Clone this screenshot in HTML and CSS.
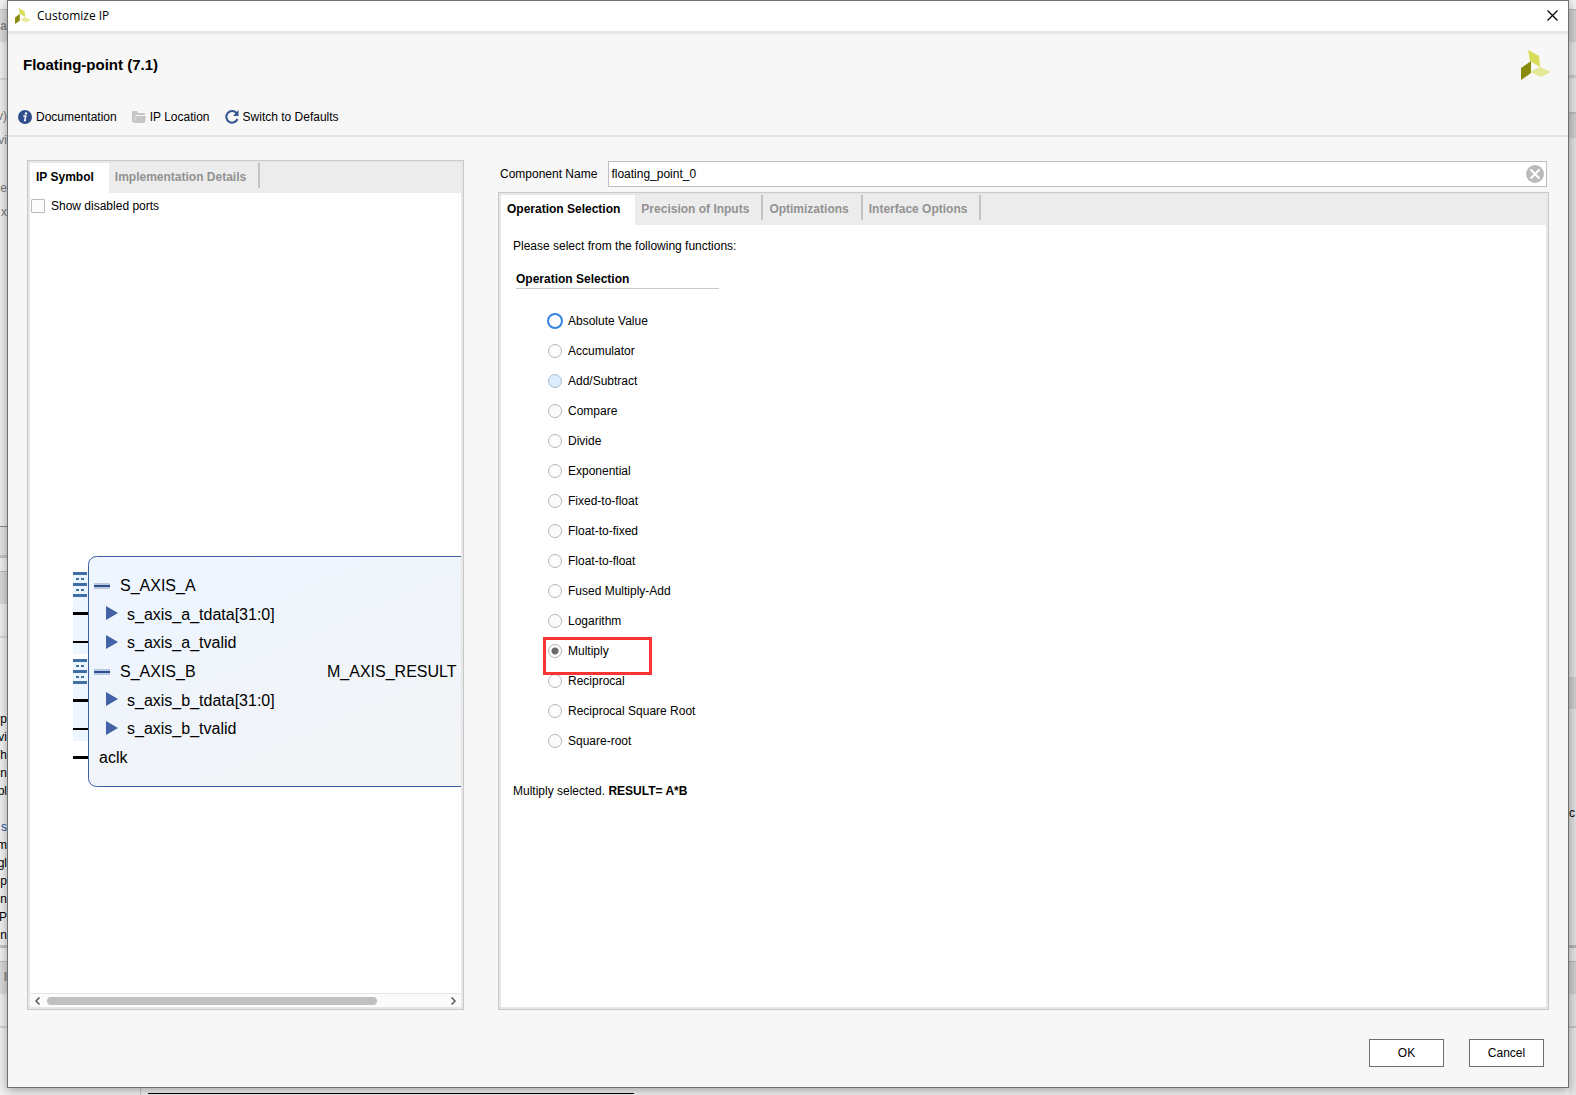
FILE: index.html
```
<!DOCTYPE html>
<html lang="en">
<head>
    <meta charset="utf-8">
    <meta name="viewport" content="width=device-width, initial-scale=1">
    <title>Customize IP</title>
    <link rel="stylesheet" href="styles.css">
</head>

<body>

<!-- main window, only its edges show round the dialog -->
<div class="backdrop" aria-hidden="true">
    <div class="edge edge-left">
        <div class="edge-tab"><p>a</p></div>
        <div class="edge-tree"><p>v)</p><p>vi</p><p> </p><p>e</p><p>x</p></div>
        <div class="edge-text">
            <p>Op</p><p>vi</p><p>Th</p><p>un</p><p>pl</p><p> </p><p class="link">s</p><p>m</p><p>gl</p><p>p</p><p>in</p><p>P</p><p>n</p>
        </div>
        <div class="edge-tab"><p>I</p></div>
    </div>
    <div class="edge edge-right"><p>c</p></div>
    <div class="edge-bottom"></div>
</div>

<main class="dialog">
    <header class="titlebar">
        <svg class="logo-small" viewBox="0 0 30 30" width="16" height="16">
            <path fill="#d9dc56" d="M7 0 18 6 19 17 9 11z" />
            <path fill="#8a8b0d" d="M0 18 9 11 9 24 0 30z" />
            <path fill="#e8eaa0" d="M10 22 19 17 30 22 20 27z" />
        </svg>
        <span class="title">Customize IP</span>
        <button class="close" aria-label="Close">
            <svg viewBox="0 0 11 11" width="11" height="11"><path d="M.5.5l10 10M10.500.5l-10 10" fill="none" stroke="#000" stroke-width="1.2" /></svg>
        </button>
    </header>

    <div class="head">
        <h1>Floating-point (7.1)</h1>
        <svg viewBox="0 0 30 30" width="30" height="30">
            <path fill="#d9dc56" d="M7 0 18 6 19 17 9 11z" />
            <path fill="#8a8b0d" d="M0 18 10 11 10 23 0 30z" />
            <path fill="#e5e896" d="M9 22 19 17 30 22 20 27z" />
        </svg>
    </div>

    <nav class="toolbar">
        <button>
            <svg viewBox="0 0 14 14" width="14" height="14">
                <circle cx="7" cy="7" r="7" fill="#2f4f8a" />
                <circle cx="8" cy="3.400" r="1.200" fill="#fff" />
                <path d="M5.300 6h2.500L6.700 10.500h1.200" fill="none" stroke="#fff" stroke-width="1.500" />
            </svg>
            Documentation
        </button>
        <button>
            <svg viewBox="0 0 14 14" width="14" height="14">
                <path fill="#c6c6c6" d="M0 2q0-1 1-1h4l1 2h6q1 0 1 1v1H4L2 12H0z" />
                <path fill="#c6c6c6" d="M4.500 6H14l-1 6q0 1-1 1H1.500z" />
            </svg>
            IP Location
        </button>
        <button>
            <svg viewBox="0 0 14 14" width="14" height="14">
                <path d="M11.500 3A5.800 5.800 0 1 0 12.500 9" fill="none" stroke="#34558f" stroke-width="2" />
                <path fill="#34558f" d="M13.500 0v6H8z" />
            </svg>
            Switch to Defaults
        </button>
    </nav>

    <div class="content">
        <section class="panel symbol">
            <div class="tabs" role="tablist">
                <button class="tab active" role="tab" aria-selected="true">IP Symbol</button>
                <button class="tab" role="tab">Implementation Details</button>
            </div>
            <label class="check"><input type="checkbox"> Show disabled ports</label>
            <svg class="diagram" height="234" aria-label="IP symbol">
                <defs>
                    <linearGradient id="body" x1="0" y1="0" x2="1" y2="1">
                        <stop offset="0" stop-color="#edf5ff" />
                        <stop offset="1" stop-color="#f4f4f4" />
                    </linearGradient>
                    <g id="bus">
                        <path fill="#edf5ff" d="M43 0h15v82H43z" />
                        <path fill="#3d6fa5" d="M43 0h14v3H43zM43 11h14v3H43zM43 22h14v3H43zM46 6h3v2h-3zM51 6h3v2h-3zM46 17h3v2h-3zM51 17h3v2h-3z" />
                        <path fill="#000" d="M43 40h15v3H43zM43 69h15v2H43z" />
                    </g>
                    <g id="pins">
                        <path fill="#b9c8de" d="M64 11h16v6H64z" />
                        <path fill="#2d4f8d" d="M64 13h16v2H64z" />
                        <path fill="#4263a5" d="M76 34l12 7-12 7zM76 63l12 7-12 7z" />
                    </g>
                </defs>
                <use href="#bus" y="18" />
                <use href="#bus" y="105" />
                <path fill="#000" d="M43 202h15v3H43z" />
                <rect x="58.500" y="2.500" width="520" height="230" rx="8" fill="url(#body)" stroke="#3a5fa5" />
                <use href="#pins" y="18" />
                <use href="#pins" y="104" />
                <text x="90" y="37">S_AXIS_A</text>
                <text x="97" y="66">s_axis_a_tdata[31:0]</text>
                <text x="97" y="94">s_axis_a_tvalid</text>
                <text x="90" y="123">S_AXIS_B</text>
                <text x="297" y="123">M_AXIS_RESULT</text>
                <text x="97" y="152">s_axis_b_tdata[31:0]</text>
                <text x="97" y="180">s_axis_b_tvalid</text>
                <text x="69" y="209">aclk</text>
            </svg>
            <div class="scrollbar">
                <svg viewBox="0 0 5 8" width="5" height="8"><path d="M4.500 0.500L1 4l3.500 3.500" fill="none" stroke="#555" stroke-width="1.500" /></svg>
                <div class="track"><div class="thumb"></div></div>
                <svg viewBox="0 0 5 8" width="5" height="8"><path d="M.5.5L4 4 .5 7.500" fill="none" stroke="#555" stroke-width="1.500" /></svg>
            </div>
        </section>

        <section class="config">
            <div class="name-row">
                <label for="component">Component Name</label>
                <div class="name-box">
                    <input id="component" type="text" value="floating_point_0">
                    <button aria-label="Clear">
                        <svg viewBox="0 0 18 18" width="18" height="18">
                            <circle cx="9" cy="9" r="9" fill="#b9bbbd" />
                            <path d="M4.500 4.500l9 9M13.500 4.500l-9 9" stroke="#fff" stroke-width="2" />
                        </svg>
                    </button>
                </div>
            </div>

            <div class="panel">
                <div class="tabs" role="tablist">
                    <button class="tab active" role="tab" aria-selected="true">Operation Selection</button>
                    <button class="tab" role="tab">Precision of Inputs</button>
                    <button class="tab" role="tab">Optimizations</button>
                    <button class="tab" role="tab">Interface Options</button>
                </div>
                <div class="page">
                    <p>Please select from the following functions:</p>
                    <fieldset>
                        <legend>Operation Selection</legend>
                        <label><input class="focused" type="radio" name="op"> Absolute Value</label>
                        <label><input type="radio" name="op"> Accumulator</label>
                        <label><input class="hovered" type="radio" name="op"> Add/Subtract</label>
                        <label><input type="radio" name="op"> Compare</label>
                        <label><input type="radio" name="op"> Divide</label>
                        <label><input type="radio" name="op"> Exponential</label>
                        <label><input type="radio" name="op"> Fixed-to-float</label>
                        <label><input type="radio" name="op"> Float-to-fixed</label>
                        <label><input type="radio" name="op"> Float-to-float</label>
                        <label><input type="radio" name="op"> Fused Multiply-Add</label>
                        <label><input type="radio" name="op"> Logarithm</label>
                        <label class="marked"><input type="radio" name="op" checked> Multiply</label>
                        <label><input type="radio" name="op"> Reciprocal</label>
                        <label><input type="radio" name="op"> Reciprocal Square Root</label>
                        <label><input type="radio" name="op"> Square-root</label>
                    </fieldset>
                    <p>Multiply selected. <b>RESULT= A*B</b></p>
                </div>
            </div>
        </section>
    </div>

    <footer>
        <button>OK</button>
        <button>Cancel</button>
    </footer>
</main>

</body>
</html>
```
FILE: styles.css
```
*, ::after { box-sizing: border-box; }
body { margin: 0; height: 100vh; padding: 0 7px 7px; overflow: hidden; background: #f0f0f0; color: #000; font: 12px/16px "Liberation Sans", Arial, sans-serif; }
button, input { font: inherit; color: inherit; margin: 0; }
button { border: none; background: none; padding: 0; }
svg { display: block; flex: none; }
p, h1 { margin: 0; }

/* window behind the dialog */
.backdrop { position: absolute; inset: 0; z-index: -1; overflow: hidden; display: flex; justify-content: space-between; }
.edge { width: 7px; overflow: hidden; display: flex; flex-direction: column; }
.edge div { display: flex; flex-direction: column; align-items: flex-end; }
.edge p { white-space: pre; }
.edge-left { background: linear-gradient(#f4f4f4 9px, #c4c4c4 9px 10px, #dadada 10px 42px, #f0f0f0 42px 78px, #d8d8d8 78px 80px, #efefef 80px 526px, #888 526px 527px, #e4e4e4 527px 555px, #c4c4c4 555px 558px, #f0f0f0 558px 571px, #bbb 571px 572px, #d8d8d8 572px 604px, #f0f0f0 604px 636px, #d8d8d8 636px 638px, #f2f2f2 638px 945px, #c4c4c4 945px 948px, #f0f0f0 948px 961px, #bbb 961px 962px, #dadada 962px 994px, #f0f0f0 994px 1026px, #d4d4d4 1026px 1028px, #f0f0f0 1028px); }
.edge-right { background: linear-gradient(#f4f4f4 9px, #bbb 9px 10px, #cfcfcf 10px 42px, #e4e4e4 42px 75px, #c8c8c8 75px 78px, #e4e4e4 78px 112px, #bbb 112px 114px, #cdcdcd 114px 138px, #e1e1e1 138px 677px, #cdcdcd 677px 709px, #e1e1e1 709px 945px, #b4b4b4 945px 948px, #e4e4e4 948px 961px, #b4b4b4 961px 962px, #cdcdcd 962px 994px, #e1e1e1 994px 1026px, #c4c4c4 1026px 1028px, #e4e4e4 1028px); }
.edge-tab { color: #888; font-weight: bold; padding-top: 18px; }
.edge-tree { color: #777; line-height: 24px; padding-top: 70px; }
.edge-text { line-height: 18px; padding-top: 486px; }
.edge-text + .edge-tab { padding-top: 25px; }
.edge-text .link { color: #1a4f9c; }
.edge-right p { margin-top: 805px; }
.edge-bottom { position: absolute; bottom: 0; left: 140px; width: 494px; height: 7px; border-left: 1px solid #ccc; padding-left: 7px; }
.edge-bottom::after { content: ""; display: block; margin-top: 5px; border-bottom: 1px solid #000; }

.dialog { height: 100%; display: flex; flex-direction: column; background: #f7f7f7; border: 1px solid #707070; box-shadow: 0 2px 10px rgba(0, 0, 0, 0.35); }

.titlebar { display: flex; align-items: center; height: 33px; padding: 0 10px 1px 7px; background: #fff; border-bottom: 3px solid #e6e6e6; }
.title { flex: 1; margin-left: 6px; font-family: "Open Sans", "Noto Sans", sans-serif; }

.head { display: flex; justify-content: space-between; align-items: center; padding: 16px 17px 0 15px; }
.head h1 { font-size: 15px; line-height: 18px; }

.toolbar { display: flex; gap: 15px; padding: 29px 10px 10px; border-bottom: 2px solid #e6e6e6; }
.toolbar button { display: flex; align-items: center; gap: 4px; }

.content { flex: 1; min-height: 0; display: flex; gap: 34px; padding: 23px 19px 0; }

.panel { display: flex; flex-direction: column; background: #fff; border: 1px solid #c9c9c9; box-shadow: inset 0 0 0 2px #e7e7e7; padding: 2px; }
.symbol { width: 437px; flex: none; }
.config { flex: 1; display: flex; flex-direction: column; gap: 5px; padding-top: 1px; }
.config .panel { flex: 1; }

.tabs { display: flex; align-items: flex-start; height: 30px; background: #ececec; }
.tab { height: 25px; padding: 2px 12px 0 6px; font-weight: bold; color: #929292; border-right: 2px solid #c3c3c3; }
.tab.active { height: 30px; padding: 0 15px 3px 6px; color: #000; background: #fff; border-right: none; }

.check { display: flex; align-items: center; gap: 6px; padding: 5px 1px; }
.check input { appearance: none; width: 14px; height: 14px; border: 1px solid #bbb; border-radius: 1px; background: #fcfcfc; }

.diagram { width: 100%; margin-top: auto; margin-bottom: 205px; font-size: 16px; overflow: hidden; }

.scrollbar { display: flex; align-items: center; gap: 7px; height: 14px; padding: 0 5px; background: #fbfbfb; border-top: 1px solid #e6e6e6; }
.track { flex: 1; }
.thumb { width: 83%; height: 8px; border-radius: 4px; background: #c0c0c0; }

.name-row { display: flex; align-items: center; gap: 11px; padding: 0 2px; }
.name-box { flex: 1; display: flex; align-items: center; height: 26px; padding-right: 2px; background: #fff; border: 1px solid #bfbfbf; }
.name-box input { flex: 1; border: none; outline: none; background: none; padding: 0 2px; }

.page { padding: 13px 12px; }
fieldset { margin: 17px 0 27px; border: none; padding: 0 3px; }
legend { width: 203px; margin-bottom: 17px; padding: 0 0 1px; font-weight: bold; border-bottom: 1px solid #c9c9c9; }
fieldset label { display: flex; align-items: center; gap: 6px; height: 30px; padding-left: 32px; position: relative; }
fieldset input { appearance: none; width: 14px; height: 14px; border: 1px solid #b5b5b5; border-radius: 50%; background: #fcfcfc; }
fieldset input:checked { background: radial-gradient(#6a6a6a 3px, #fcfcfc 4px); }
fieldset input.focused { border: none; outline: 2px solid #3584e4; outline-offset: -1px; }
fieldset input.hovered { background: #d9edff; border-color: #a9bccb; }

/* red outline drawn over the list */
.marked::after { content: ""; position: absolute; top: 1px; left: 27px; width: 109px; height: 38px; border: 3px solid #fb3434; z-index: 1; }

footer { display: flex; justify-content: flex-end; gap: 25px; padding: 29px 24px 20px; }
footer button { width: 75px; height: 28px; background: #fff; border: 1px solid #6e6e6e; }
```
